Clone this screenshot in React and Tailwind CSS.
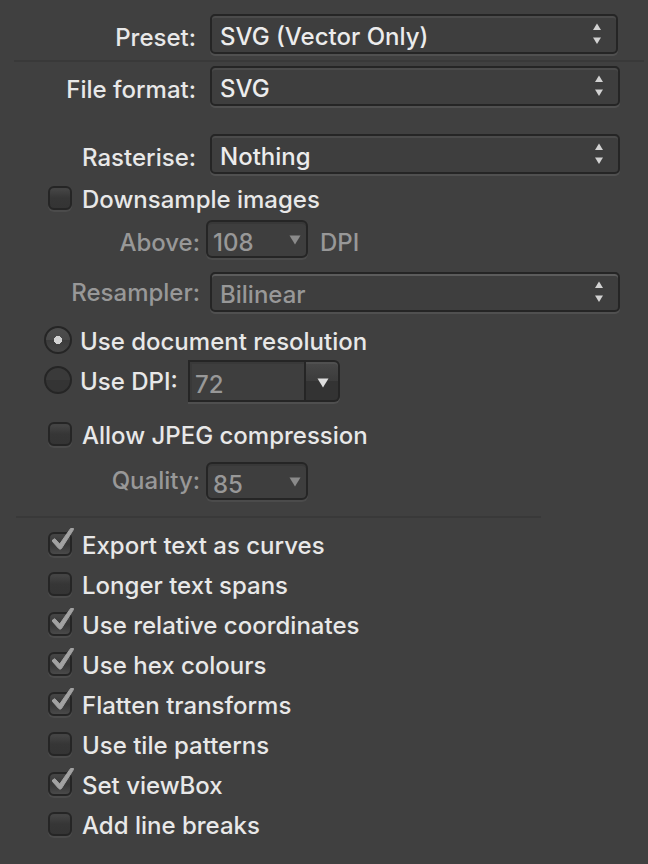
import React from "react";
import { clsx } from "clsx";

function Stepper() {
  return (
    <svg className="pointer-events-none absolute top-2 right-4 h-6 w-2.5" viewBox="0 0 10 24" fill="#d2d2d2" aria-hidden="true">
      <path d="M5 1.5 9 8H1Z" />
      <path d="M1 15.500h8L5 22Z" />
    </svg>
  );
}

function Triangle({ className }) {
  return (
    <svg className={className} viewBox="0 0 12 10" fill="currentColor" aria-hidden="true">
      <path d="M0.500 0.500h11L6 9.500Z" />
    </svg>
  );
}

function PopupRow({ id, label, value, disabled, className }) {
  return (
    <div className={clsx("flex h-10", className)}>
      <label
        htmlFor={id}
        className={clsx(
          "shrink-0 text-right leading-10",
          disabled ? "mr-2.5 w-50 pt-px text-[#989898]" : "mr-3.5 w-49 pt-1 text-[#e8e8e8]"
        )}
      >
        {label}
      </label>
      <div className="relative min-w-0 flex-1">
        <select
          id={id}
          disabled={disabled}
          className={clsx(
            "h-10 w-full appearance-none rounded-[5px] border-2 border-[#252525] bg-[#3e3e3e] pt-[3px] pr-10 pl-2 disabled:opacity-100",
            disabled
              ? "text-[#989898] shadow-[0_2px_0_#505050,inset_0_2px_0_#5c5c5c]"
              : "text-[#ececec] shadow-[0_2px_0_#505050,inset_0_2px_0_#4b4b4b]"
          )}
        >
          <option>{value}</option>
        </select>
        <Stepper />
      </div>
    </div>
  );
}

function SmallPopup({ id, value }) {
  return (
    <div className="relative w-[102px]">
      <select
        id={id}
        disabled
        className="h-[38px] w-full appearance-none rounded-md border-2 border-[#252525] bg-[#3e3e3e] pt-[3px] pl-[5px] text-[#989898] shadow-[0_2px_0_#4b4b4b,inset_0_2px_0_#383838] disabled:opacity-100"
      >
        <option>{value}</option>
      </select>
      <Triangle className="pointer-events-none absolute top-[15px] right-[7px] h-2.5 w-3 text-[#8a8a8a]" />
    </div>
  );
}

function CheckRow({ label, defaultChecked, className }) {
  return (
    <label className={clsx("flex h-10 w-fit items-center pl-12", className)}>
      <span className="relative mr-2.5 size-6">
        <input
          type="checkbox"
          defaultChecked={defaultChecked}
          className="peer block size-6 appearance-none rounded-md border-2 border-[#252525] bg-linear-to-b from-[#444444] from-10% via-[#363636] via-50% to-[#343434] shadow-[0_2px_0_#4b4b4b] checked:to-[#4a4a4a]"
        />
        <svg
          className="pointer-events-none absolute -top-1.5 left-0 hidden h-[30px] w-7 peer-checked:block"
          viewBox="0 0 28 30"
          fill="#a2a2a2"
          stroke="#a2a2a2"
          strokeLinejoin="round"
          aria-hidden="true"
        >
          <path d="M4.500 14 6.800 12.700 11.700 18 22.600 2.500H25.500V3.500L13.500 22.500Q12 24 10.500 22.300L4.500 15.500Z" />
        </svg>
      </span>
      <span className="pt-[3px]">{label}</span>
    </label>
  );
}

function Radio({ id, defaultChecked }) {
  return (
    <input
      id={id}
      type="radio"
      name="resolution"
      defaultChecked={defaultChecked}
      className="mr-2 ml-11 size-7 shrink-0 appearance-none rounded-full border-2 border-[#252525] bg-linear-to-b from-[#3a3a3a] from-50% to-[#343434] to-50% checked:bg-[radial-gradient(circle,#d2d2d2_4px,transparent_4px),linear-gradient(#4d4d4d,#484848_50%,#3b3b3b_50%,#454545)]"
    />
  );
}

const options = [
  ["Export text as curves", true],
  ["Longer text spans", false],
  ["Use relative coordinates", true],
  ["Use hex colours", true],
  ["Flatten transforms", true],
  ["Use tile patterns", false],
  ["Set viewBox", true],
  ["Add line breaks", false],
];

export default function App() {
  return (
    <form className="min-h-screen bg-[#404040] pt-3.5 pb-5 font-['Inter','Liberation_Sans',sans-serif] text-[24px] font-medium whitespace-nowrap text-[#e8e8e8]">
      <PopupRow id="preset" label="Preset:" value="SVG (Vector Only)" className="pr-[30px]" />
      <hr className="mt-1.5 mr-1 mb-1 ml-3.5 border-t-2 border-[#393939]" />
      <PopupRow id="format" label="File format:" value="SVG" className="pr-7" />
      <PopupRow id="rasterise" label="Rasterise:" value="Nothing" className="mt-7 pr-7" />

      <CheckRow label="Downsample images" className="mt-1" />
      <div className="mt-0.5 flex h-[38px] text-[#989898]">
        <label htmlFor="above" className="mr-1.5 w-50 pt-1 text-right leading-[38px]">Above:</label>
        <SmallPopup id="above" value="108" />
        <span className="ml-3 pt-1 leading-[38px]">DPI</span>
      </div>
      <PopupRow id="resampler" label="Resampler:" value="Bilinear" disabled className="mt-3.5 pr-7" />

      <div className="mt-2 flex h-10 items-center">
        <Radio id="document" defaultChecked />
        <label htmlFor="document" className="pt-[3px]">Use document resolution</label>
      </div>
      <div className="flex h-[42px] items-start">
        <div className="flex h-10 items-center">
          <Radio id="dpi" />
          <label htmlFor="dpi" className="w-[108px] pt-[3px]">Use DPI:</label>
        </div>
        <div className="flex h-[42px] w-[152px] rounded-r-md shadow-[0_2px_0_#4f4f4f]">
          <input
            type="text"
            aria-label="DPI"
            defaultValue="72"
            className="w-[118px] border-2 border-[#252525] bg-[#3e3e3e] pt-2 pl-[5px] text-[#989898] shadow-[inset_2px_2px_0_#393939]"
          />
          <button
            type="button"
            aria-label="Choose DPI"
            className="flex flex-1 items-center justify-center rounded-r-md border-2 border-l-0 border-[#252525] bg-linear-to-b from-[#484848] via-[#3c3c3c] via-50% to-[#333333] to-50% shadow-[inset_0_2px_0_#505050]"
          >
            <Triangle className="mt-1 ml-0.5 h-2.5 w-3 text-[#dedede]" />
          </button>
        </div>
      </div>

      <CheckRow label="Allow JPEG compression" className="mt-3" />
      <div className="mt-2 flex h-[38px] text-[#989898]">
        <label htmlFor="quality" className="mr-1.5 w-50 text-right leading-[38px]">Quality:</label>
        <SmallPopup id="quality" value="85" />
      </div>
      <hr className="mt-4 mr-4 mb-1.5 ml-4 max-w-[525px] border-t-2 border-[#393939]" />

      {options.map(([label, on]) => (
        <CheckRow key={label} label={label} defaultChecked={on} />
      ))}
    </form>
  );
}
